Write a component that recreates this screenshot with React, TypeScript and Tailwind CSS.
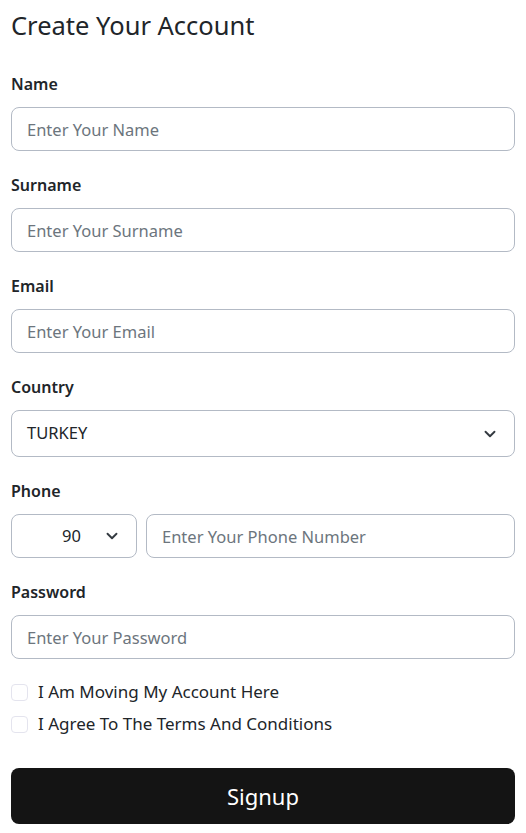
import { ChevronDown } from "lucide-react";

const font = { fontFamily: '"Noto Sans", "Open Sans", Arial, sans-serif' };

function Field({ label, placeholder }: { label: string; placeholder: string }) {
  return (
    <div className="mb-[22px]">
      <label className="block text-[16px] font-semibold text-[#212529] leading-[24px] mb-[11px]">{label}</label>
      <input
        type="text"
        placeholder={placeholder}
        className="w-full h-[44px] border border-[#b3bac5] rounded-[8px] px-[15px] text-[16.5px] text-[#212529] placeholder:text-[#6c757d] outline-none"
      />
    </div>
  );
}

export default function App() {
  return (
    <div className="bg-white min-h-[833px] px-[11px] pt-[8px]" style={font}>
      <h1 className="text-[25.5px] leading-[34px] text-[#212529] mb-[30px]">Create Your Account</h1>

      <Field label="Name" placeholder="Enter Your Name" />
      <Field label="Surname" placeholder="Enter Your Surname" />
      <Field label="Email" placeholder="Enter Your Email" />

      <div className="mb-[22px]">
        <label className="block text-[16px] font-semibold text-[#212529] leading-[24px] mb-[11px]">Country</label>
        <div className="h-[47px] border border-[#b3bac5] rounded-[8px] px-[15px] flex items-center justify-between">
          <span className="text-[16.5px] text-[#212529]">TURKEY</span>
          <ChevronDown size={18} strokeWidth={2.5} className="text-[#343a40]" />
        </div>
      </div>

      <div className="mb-[22px]">
        <label className="block text-[16px] font-semibold text-[#212529] leading-[24px] mb-[11px]">Phone</label>
        <div className="flex gap-[9px]">
          <div className="w-[126px] h-[44px] border border-[#b3bac5] rounded-[8px] flex items-center pl-[50px] pr-[15px] justify-between">
            <span className="text-[16.5px] text-[#212529]">90</span>
            <ChevronDown size={18} strokeWidth={2.5} className="text-[#343a40]" />
          </div>
          <input
            type="text"
            placeholder="Enter Your Phone Number"
            className="flex-1 h-[44px] border border-[#b3bac5] rounded-[8px] px-[15px] text-[16.5px] placeholder:text-[#6c757d] outline-none"
          />
        </div>
      </div>

      <Field label="Password" placeholder="Enter Your Password" />

      <div className="flex flex-col gap-[10px]">
        <label className="flex items-center gap-[10px] text-[17px] text-[#212529] leading-[22px]">
          <span className="w-[17px] h-[17px] border border-[#e4e4ee] rounded-[4px] inline-block" />
          I Am Moving My Account Here
        </label>
        <label className="flex items-center gap-[10px] text-[17px] text-[#212529] leading-[22px]">
          <span className="w-[17px] h-[17px] border border-[#e4e4ee] rounded-[4px] inline-block" />
          I Agree To The Terms And Conditions
        </label>
      </div>

      <button className="mt-[33px] w-full h-[56px] bg-[#141414] text-white text-[22px] rounded-[8px]">Signup</button>
    </div>
  );
}
